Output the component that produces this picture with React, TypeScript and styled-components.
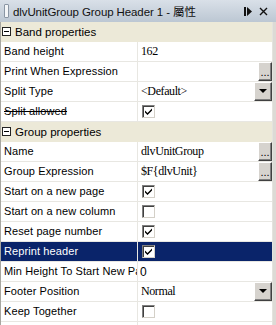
import React from 'react'
import styled, { createGlobalStyle } from 'styled-components'

const GlobalStyle = createGlobalStyle`
  html, body {
    margin: 0;
    padding: 0;
    background: #ffffff;
  }
`

const Panel = styled.div`
  width: 276px;
  height: 325px;
  display: flex;
  flex-direction: column;
  overflow: hidden;
  background: #ffffff;
  font-family: "Liberation Sans", Arial, sans-serif;
`

const TitleBar = styled.div`
  height: 22px;
  flex: 0 0 22px;
  display: flex;
  align-items: center;
  background: linear-gradient(#d9e0e8, #bcc7d3);
  color: #111;
  font-size: 11.5px;
  letter-spacing: -0.1px;
  font-family: "Liberation Sans", "Noto Sans CJK TC", sans-serif;
  padding-left: 4px;
  padding-right: 8px;
  box-sizing: border-box;
`

const Grip = styled.div`
  width: 3px;
  height: 12px;
  background: #f4f6f8;
  border: 1px solid #8a96a4;
  border-radius: 1px;
  margin-right: 4px;
`

const TitleText = styled.div`
  flex: 1;
  white-space: nowrap;
`

const TitleIcons = styled.div`
  display: flex;
  align-items: center;
  gap: 7px;
`

const Body = styled.div`
  flex: 1;
  display: flex;
  background: #dcdad5;
`

const Grid = styled.div`
  width: 273px;
  display: flex;
  flex-direction: column;
  border-left: 1px solid #a7a6a0;
  border-right: 1px solid #e4e3de;
  box-sizing: border-box;
  background: #ffffff;
`

const Category = styled.div`
  height: 20px;
  flex: 0 0 20px;
  display: flex;
  align-items: center;
  background: #ece9d8;
  font-size: 11.5px;
  color: #000;
  padding-left: 1px;
  box-sizing: border-box;
`

const Toggle = styled.div`
  width: 9px;
  height: 9px;
  box-sizing: border-box;
  border: 1px solid #222;
  background: #fff;
  position: relative;
  margin-right: 4px;
  margin-top: -1px;

  &::after {
    content: '';
    position: absolute;
    left: 1px;
    right: 1px;
    top: 3px;
    height: 1px;
    background: #000;
  }
`

const Row = styled.div<{ $selected?: boolean }>`
  height: 20px;
  flex: 0 0 20px;
  display: flex;
  box-sizing: border-box;
  border-bottom: 1px solid #e8e7e2;
  background: ${p => (p.$selected ? '#0a246a' : '#ffffff')};
  color: ${p => (p.$selected ? '#ffffff' : '#000000')};
`

const Label = styled.div<{ $struck?: boolean }>`
  width: 137px;
  flex: 0 0 137px;
  box-sizing: border-box;
  border-right: 1px solid #e8e7e2;
  padding-left: 3px;
  font-size: 11px;
  letter-spacing: 0.1px;
  line-height: 19px;
  white-space: nowrap;
  overflow: hidden;
  text-decoration: ${p => (p.$struck ? 'line-through' : 'none')};
`

const Value = styled.div`
  flex: 1;
  display: flex;
  align-items: center;
  min-width: 0;
  padding-left: 3px;
  font-family: "Liberation Serif", "Times New Roman", serif;
  font-size: 12px;
  letter-spacing: -0.4px;
`

const ValueText = styled.div<{ $sans?: boolean }>`
  flex: 1;
  white-space: nowrap;
  overflow: hidden;
  font-family: ${p => (p.$sans ? '"Liberation Sans", Arial, sans-serif' : 'inherit')};
  font-size: ${p => (p.$sans ? '12px' : 'inherit')};
  margin-left: ${p => (p.$sans ? '-1px' : '0')};
`

const CellButton = styled.div<{ $wide?: boolean }>`
  width: ${p => (p.$wide ? '18px' : '14px')};
  height: 19px;
  margin-top: -1px;
  box-sizing: border-box;
  background: #d6d3ce;
  border-top: 1px solid #ffffff;
  border-left: 1px solid #ffffff;
  border-right: 1px solid #404040;
  border-bottom: 1px solid #404040;
  box-shadow: inset -1px -1px 0 #808080;
  display: flex;
  align-items: flex-end;
  justify-content: center;
  color: #000;
  font-family: "Liberation Sans", Arial, sans-serif;
  font-size: 11px;
  letter-spacing: 0;
  line-height: 12px;
  padding-bottom: 2px;
`

const Arrow = styled.div`
  width: 0;
  height: 0;
  border-left: 4px solid transparent;
  border-right: 4px solid transparent;
  border-top: 4px solid #000;
  margin-bottom: 5px;
`

const Check = styled.div`
  width: 13px;
  height: 13px;
  box-sizing: border-box;
  margin-left: 1px;
  background: #ffffff;
  border-top: 1px solid #808080;
  border-left: 1px solid #808080;
  border-right: 1px solid #d4d0c8;
  border-bottom: 1px solid #d4d0c8;
  box-shadow: inset 1px 1px 0 #404040;
  display: flex;
  align-items: center;
  justify-content: center;
`

const Filler = styled.div`
  flex: 1;
  display: flex;
`

const FillerLabel = styled.div`
  width: 137px;
  border-right: 1px solid #e8e7e2;
  box-sizing: border-box;
`

const Tick = () => (
  <svg width="9" height="9" viewBox="0 0 9 9">
    <path d="M1 3.5 L3.5 6 L8 1.5 L8 3.5 L3.5 8 L1 5.5 Z" fill="#000" />
  </svg>
)

type Prop = {
  label: string
  value?: string
  kind?: 'text' | 'dots' | 'drop' | 'check' | 'box'
  struck?: boolean
  selected?: boolean
  sans?: boolean
}

type Section = { title: string; props: Prop[] }

const sections: Section[] = [
  {
    title: 'Band properties',
    props: [
      { label: 'Band height', value: '162' },
      { label: 'Print When Expression', kind: 'dots' },
      { label: 'Split Type', value: '<Default>', kind: 'drop' },
      { label: 'Split allowed', kind: 'check', struck: true },
    ],
  },
  {
    title: 'Group properties',
    props: [
      { label: 'Name', value: 'dlvUnitGroup', kind: 'dots' },
      { label: 'Group Expression', value: '$F{dlvUnit}', kind: 'dots' },
      { label: 'Start on a new page', kind: 'check' },
      { label: 'Start on a new column', kind: 'box' },
      { label: 'Reset page number', kind: 'check' },
      { label: 'Reprint header', kind: 'check', selected: true },
      { label: 'Min Height To Start New Page', value: '0', sans: true },
      { label: 'Footer Position', value: 'Normal', kind: 'drop' },
      { label: 'Keep Together', kind: 'box' },
    ],
  },
]

const PropRow = ({ p }: { p: Prop }) => (
  <Row $selected={p.selected}>
    <Label $struck={p.struck}>{p.label}</Label>
    <Value>
      {p.kind === 'check' || p.kind === 'box' ? (
        <>
          <Check>{p.kind === 'check' && <Tick />}</Check>
          <ValueText />
        </>
      ) : (
        <ValueText $sans={p.sans}>{p.value}</ValueText>
      )}
      {p.kind === 'dots' && <CellButton>...</CellButton>}
      {p.kind === 'drop' && (
        <CellButton $wide>
          <Arrow />
        </CellButton>
      )}
    </Value>
  </Row>
)

const App = () => (
  <>
    <GlobalStyle />
    <Panel>
      <TitleBar>
        <Grip />
        <TitleText>dlvUnitGroup Group Header 1 - 屬性</TitleText>
        <TitleIcons>
          <svg width="8" height="9" viewBox="0 0 8 9">
            <rect x="0" y="0" width="2" height="9" fill="#111" />
            <path d="M3 0 L8 4.5 L3 9 Z" fill="#111" />
          </svg>
          <svg width="9" height="9" viewBox="0 0 9 9">
            <path d="M1 1 L8 8 M8 1 L1 8" stroke="#111" strokeWidth="1.4" />
          </svg>
        </TitleIcons>
      </TitleBar>
      <Body>
        <Grid>
          {sections.map(s => (
            <React.Fragment key={s.title}>
              <Category>
                <Toggle />
                {s.title}
              </Category>
              {s.props.map(p => (
                <PropRow key={p.label} p={p} />
              ))}
            </React.Fragment>
          ))}
          <Filler>
            <FillerLabel />
          </Filler>
        </Grid>
      </Body>
    </Panel>
  </>
)

export default App
